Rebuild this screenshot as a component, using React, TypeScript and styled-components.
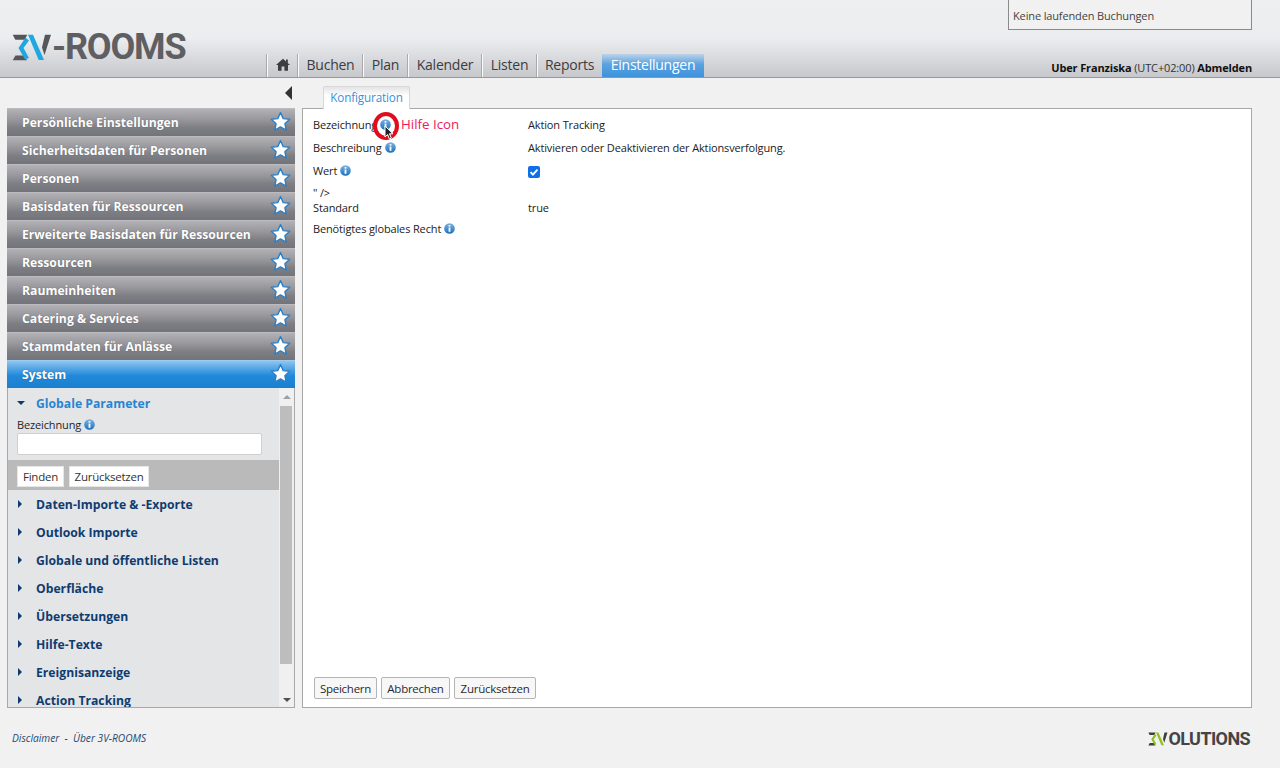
import React from "react";
import styled, { createGlobalStyle } from "styled-components";

const FONT = `"Open Sans", "Noto Sans", "Liberation Sans", sans-serif`;

const Global = createGlobalStyle`
  html, body { margin: 0; padding: 0; height: 100%; background: #f1f1f1; overflow: hidden; }
  body { font-family: ${FONT}; font-size: 11px; letter-spacing: -0.14px; color: #1f1f1f; }
  #root { height: 100%; }
  * { box-sizing: border-box; }
`;

const Page = styled.div`
  width: 1280px;
  height: 768px;
  display: flex;
  flex-direction: column;
`;

const Header = styled.header`
  height: 78px;
  flex: none;
  display: flex;
  background: linear-gradient(to bottom, #eeeff1 0, #ecedef 38px, #c7c8cc 77px);
  border-bottom: 1px solid #989898;
`;

const LogoBox = styled.div`
  width: 267px;
  flex: none;
  padding: 34px 0 0 12px;
  display: flex;
  align-items: flex-start;
`;

const LogoText = styled.span`
  font-family: Roboto, "Open Sans", sans-serif;
  font-weight: 700;
  font-size: 36px;
  line-height: 27px;
  color: #5f5f63;
  letter-spacing: -1.2px;
`;

const Nav = styled.nav`
  display: flex;
  align-items: flex-end;
  height: 77px;
`;

const NavItem = styled.a<{ $w: number; $active?: boolean }>`
  width: ${(p) => p.$w}px;
  height: 23px;
  margin-right: 1px;
  padding-bottom: 2px;
  display: flex;
  align-items: center;
  justify-content: center;
  font-size: 14px;
  letter-spacing: -0.25px;
  color: ${(p) => (p.$active ? "#fff" : "#3c3c40")};
  border-left: ${(p) => (p.$active ? "0" : "1px solid #fafafa")};
  box-shadow: ${(p) => (p.$active ? "none" : "-1px 0 0 #a9a9ad")};
  background: ${(p) =>
    p.$active ? "linear-gradient(to bottom, #bcd3e8 0, #5aa2e0 45%, #3d93db 100%)" : "transparent"};
`;

const HeaderRight = styled.div`
  margin-left: auto;
  margin-right: 28px;
  width: 244px;
  display: flex;
  flex-direction: column;
  justify-content: space-between;
  height: 77px;
`;

const Running = styled.div`
  height: 30px;
  padding: 0 0 6px 4px;
  border: 1px solid #8a8a8a;
  border-top: 0;
  background: #f1f1f1;
  display: flex;
  align-items: flex-end;
  line-height: 15px;
  color: #444;
`;

const UserLine = styled.div`
  text-align: right;
  line-height: 15px;
  padding-bottom: 2px;
  color: #333;
  white-space: nowrap;
  b { color: #111; }
`;

const SubBar = styled.div`
  height: 30px;
  flex: none;
  display: flex;
  align-items: flex-end;
  padding-left: 285px;
`;

const Collapse = styled.span`
  width: 0;
  height: 0;
  margin-bottom: 8px;
  border-top: 7px solid transparent;
  border-bottom: 7px solid transparent;
  border-right: 7px solid #333;
`;

const Tab = styled.div`
  margin-left: 31px;
  width: 87px;
  height: 23px;
  padding-bottom: 3px;
  border: 1px solid #d8d8d8;
  border-bottom: 0;
  border-radius: 2px 2px 0 0;
  background: linear-gradient(to bottom, #e4e4e6 0, #fff 40%);
  color: #3c8fd8;
  font-size: 11.7px;
  display: flex;
  align-items: center;
  justify-content: center;
  margin-bottom: -1px;
  position: relative;
  z-index: 1;
`;

const Main = styled.main`
  height: 600px;
  flex: none;
  display: flex;
  gap: 7px;
  padding: 0 28px 0 7px;
`;

const Sidebar = styled.aside`
  width: 288px;
  flex: none;
  display: flex;
  flex-direction: column;
  border-bottom: 1px solid #a8a8a8;
`;

const Section = styled.div<{ $active?: boolean }>`
  height: 28px;
  flex: none;
  display: flex;
  align-items: center;
  justify-content: space-between;
  padding: 0 5px 0 15px;
  color: #fff;
  font-weight: 700;
  font-size: 12.2px;
  letter-spacing: 0;
  text-shadow: 0 0 1px rgba(40, 40, 50, 0.5);
  background: ${(p) =>
    p.$active
      ? "linear-gradient(to bottom, #8fc4ef 0, #4fa3e4 30%, #2288da 55%, #1a7fce 100%)"
      : "linear-gradient(to bottom, #b2b2b6 0, #97979b 40%, #7d7e83 70%, #737479 100%)"};
  border-top: 1px solid ${(p) => (p.$active ? "#9dcdf3" : "#bcbcc0")};
`;

const Panel = styled.div`
  flex: 1;
  min-height: 0;
  display: flex;
  background: #e4e5e7;
  border-left: 1px solid #a8a8a8;
  border-right: 1px solid #a8a8a8;
`;

const PanelBody = styled.div`
  flex: 1;
  min-width: 0;
  overflow: hidden;
`;

const Group = styled.div<{ $open?: boolean }>`
  height: 28px;
  display: flex;
  align-items: center;
  padding: ${(p) => (p.$open ? "2px 0 0 9px" : "0 0 0 9px")};
  font-weight: 700;
  font-size: 12.2px;
  letter-spacing: 0;
  color: ${(p) => (p.$open ? "#2a84d2" : "#0f3c70")};
`;

const Caret = styled.span<{ $open?: boolean }>`
  width: 0;
  height: 0;
  flex: none;
  margin-right: ${(p) => (p.$open ? "11px" : "14px")};
  margin-left: ${(p) => (p.$open ? "0" : "1px")};
  ${(p) =>
    p.$open
      ? "border-left: 4px solid transparent; border-right: 4px solid transparent; border-top: 4px solid #0f3c70;"
      : "border-top: 4px solid transparent; border-bottom: 4px solid transparent; border-left: 4px solid #0f3c70;"}
`;

const FilterLabel = styled.div`
  display: flex;
  align-items: center;
  gap: 3px;
  padding: 0 0 1px 9px;
  height: 17px;
`;

const FilterInput = styled.input`
  display: block;
  width: 245px;
  height: 22px;
  margin: 0 0 5px 9px;
  border: 1px solid #cfcfcf;
  border-radius: 2px;
  background: #fff;
`;

const FilterBar = styled.div`
  height: 30px;
  background: #bababa;
  padding: 6px 0 0 9px;
  display: flex;
  gap: 5px;
`;

const FlatButton = styled.button<{ $w: number }>`
  width: ${(p) => p.$w}px;
  height: 21px;
  padding: 0;
  border: 1px solid #e6e6e6;
  background: #fff;
  font: 11.5px ${FONT};
  letter-spacing: -0.25px;
  color: #333;
`;

const Scroll = styled.div`
  width: 15px;
  flex: none;
  background: #f0f0f0;
  display: flex;
  flex-direction: column;
  align-items: center;
  padding: 7px 0 5px;
`;

const ScrollArrow = styled.span<{ $up?: boolean }>`
  width: 0;
  height: 0;
  border-left: 4px solid transparent;
  border-right: 4px solid transparent;
  ${(p) => (p.$up ? "border-bottom: 4px solid #a0a0a0;" : "border-top: 4px solid #505050;")}
`;

const Thumb = styled.div`
  width: 12px;
  height: 258px;
  margin: 7px 1px 0 0;
  background: #bdbdbd;
`;

const Spacer = styled.div`
  flex: 1;
`;

const Content = styled.section`
  flex: 1;
  min-width: 0;
  display: flex;
  flex-direction: column;
  background: #fff;
  border: 1px solid #a8a8a8;
  padding: 4px 10px 8px;
  position: relative;
`;

const Row = styled.div<{ $h: number }>`
  display: grid;
  grid-template-columns: 215px 1fr;
  height: ${(p) => p.$h}px;
  align-items: center;
  color: #222;
`;

const Label = styled.div`
  display: flex;
  align-items: center;
  gap: 3px;
`;

const Stray = styled.div`
  height: 13px;
  margin-top: 4px;
  line-height: 14px;
  color: #222;
`;

const Check = styled.span`
  width: 12px;
  height: 12px;
  margin-top: 2px;
  border-radius: 2px;
  background: #0f6fe6;
  display: flex;
  align-items: center;
  justify-content: center;
`;

const Actions = styled.div`
  margin-top: auto;
  display: flex;
  gap: 4px;
  padding-left: 1px;
`;

const ActionButton = styled.button<{ $w: number }>`
  width: ${(p) => p.$w}px;
  height: 22px;
  padding: 0;
  border: 1px solid #b4b4b4;
  border-radius: 2px;
  background: #f7f7f7;
  font: 11.5px ${FONT};
  letter-spacing: -0.25px;
  color: #2a2a30;
`;

const Highlight = styled.div`
  position: absolute;
  left: 70px;
  top: 3px;
  width: 26px;
  height: 28px;
  border: 4.5px solid #e00d1e;
  border-radius: 50%;
`;

const Pointer = styled.svg`
  position: absolute;
  left: 81px;
  top: 16px;
`;

const Annotation = styled.span`
  position: absolute;
  left: 98px;
  top: 6px;
  font-size: 13.3px;
  letter-spacing: 0;
  line-height: 18px;
  color: #f0195a;
`;

const Footer = styled.footer`
  flex: 1;
  display: flex;
  align-items: center;
  justify-content: space-between;
  padding: 0 30px 0 12px;
`;

const FooterLinks = styled.div`
  font-size: 10.2px;
  letter-spacing: 0;
  font-style: italic;
  color: #1c4a72;
`;

const FootLogo = styled.div`
  display: flex;
  align-items: center;
  margin-top: 2px;
`;

const FootLogoText = styled.span`
  font-family: Roboto, "Open Sans", sans-serif;
  font-weight: 700;
  font-size: 18px;
  line-height: 16px;
  letter-spacing: -0.6px;
  color: #444448;
`;

const Info = ({ size = 11 }: { size?: number }) => (
  <svg width={size} height={size} viewBox="0 0 12 12" style={{ flex: "none" }}>
    <defs>
      <linearGradient id="ig" x1="0" y1="0" x2="0" y2="1">
        <stop offset="0" stopColor="#7db4e2" />
        <stop offset="1" stopColor="#1f6fb8" />
      </linearGradient>
    </defs>
    <circle cx="6" cy="6" r="5.8" fill="url(#ig)" />
    <rect x="5" y="5" width="2" height="4.6" fill="#fff" />
    <rect x="5" y="2.3" width="2" height="1.7" fill="#fff" />
  </svg>
);

const Star = () => (
  <svg width="21" height="21" viewBox="0 0 24 24" style={{ flex: "none", marginBottom: 3, marginRight: -1 }}>
    <path
      d="M12 1.8l3.1 6.9 7.4.8-5.5 5 1.5 7.4L12 18.2l-6.5 3.7L7 14.5l-5.5-5 7.4-.8z"
      fill="#fff"
      stroke="#2a7fc8"
      strokeWidth="1.6"
      strokeLinejoin="round"
    />
  </svg>
);

const Home = () => (
  <svg width="14" height="13" viewBox="0 0 14 13">
    <path d="M7 .8L0 7h2v5.8h3.6V8.6h2.8v4.2H12V7h2l-2.2-2V1.5H10v1.9z" fill="#3d3d40" />
  </svg>
);

const Mark = ({ dark, accent, w, h }: { dark: string; accent: string; w: number; h: number }) => (
  <svg width={w} height={h} viewBox="0 0 40 27" style={{ flex: "none" }}>
    <path d="M.7.7h14.6l-2.6 5H3.3z" fill={dark} />
    <path d="M.7 26.3l2.8-4.8H12l3 4.8z" fill={dark} />
    <path d="M13.5 3.5L17 6.5 11.5 14 17 24l-4 1.5L6.5 14z" fill={accent} />
    <path d="M16 .7h5L32 26h-5.3z" fill={accent} />
    <path d="M33 .7h6L32.5 21 30 13.5z" fill={dark} />
  </svg>
);

const sections = [
  "Persönliche Einstellungen",
  "Sicherheitsdaten für Personen",
  "Personen",
  "Basisdaten für Ressourcen",
  "Erweiterte Basisdaten für Ressourcen",
  "Ressourcen",
  "Raumeinheiten",
  "Catering & Services",
  "Stammdaten für Anlässe",
];

const groups = [
  "Daten-Importe & -Exporte",
  "Outlook Importe",
  "Globale und öffentliche Listen",
  "Oberfläche",
  "Übersetzungen",
  "Hilfe-Texte",
  "Ereignisanzeige",
  "Action Tracking",
];

export default function App() {
  return (
    <Page>
      <Global />
      <Header>
        <LogoBox>
          <Mark dark="#55555a" accent="#1ea7e0" w={40} h={27} />
          <LogoText>-ROOMS</LogoText>
        </LogoBox>
        <Nav>
          <NavItem $w={30}><Home /></NavItem>
          <NavItem $w={64}>Buchen</NavItem>
          <NavItem $w={44}>Plan</NavItem>
          <NavItem $w={73}>Kalender</NavItem>
          <NavItem $w={54}>Listen</NavItem>
          <NavItem $w={64}>Reports</NavItem>
          <NavItem $w={102} $active>Einstellungen</NavItem>
        </Nav>
        <HeaderRight>
          <Running>Keine laufenden Buchungen</Running>
          <UserLine><b>Uber Franziska</b> (UTC+02:00) <b>Abmelden</b></UserLine>
        </HeaderRight>
      </Header>
      <SubBar>
        <Collapse />
        <Tab>Konfiguration</Tab>
      </SubBar>
      <Main>
        <Sidebar>
          {sections.map((s) => (
            <Section key={s}>{s}<Star /></Section>
          ))}
          <Section $active>System<Star /></Section>
          <Panel>
            <PanelBody>
              <Group $open><Caret $open />Globale Parameter</Group>
              <FilterLabel>Bezeichnung <Info /></FilterLabel>
              <FilterInput />
              <FilterBar>
                <FlatButton $w={47}>Finden</FlatButton>
                <FlatButton $w={80}>Zurücksetzen</FlatButton>
              </FilterBar>
              {groups.map((g) => (
                <Group key={g}><Caret />{g}</Group>
              ))}
            </PanelBody>
            <Scroll>
              <ScrollArrow $up />
              <Thumb />
              <Spacer />
              <ScrollArrow />
            </Scroll>
          </Panel>
        </Sidebar>
        <Content>
          <Row $h={23}><Label>Bezeichnung <Info /></Label><div>Aktion Tracking</div></Row>
          <Row $h={23}><Label>Beschreibung <Info /></Label><div>Aktivieren oder Deaktivieren der Aktionsverfolgung.</div></Row>
          <Row $h={23}>
            <Label>Wert <Info /></Label>
            <Check>
              <svg width="10" height="10" viewBox="0 0 10 10">
                <path d="M1.5 5.2l2.4 2.4 4.6-5" fill="none" stroke="#fff" strokeWidth="1.9" />
              </svg>
            </Check>
          </Row>
          <Stray>" /&gt;</Stray>
          <Row $h={16}><div>Standard</div><div>true</div></Row>
          <Row $h={26}><Label>Benötigtes globales Recht <Info /></Label><div /></Row>
          <Actions>
            <ActionButton $w={63}>Speichern</ActionButton>
            <ActionButton $w={69}>Abbrechen</ActionButton>
            <ActionButton $w={82}>Zurücksetzen</ActionButton>
          </Actions>
          <Highlight />
          <Pointer width="12" height="17" viewBox="0 0 12 17">
            <path d="M1 1v11l2.6-2.5L5.4 14l1.9-.9-1.8-4.3H9z" fill="#222" stroke="#fff" strokeWidth="1" />
          </Pointer>
          <Annotation>Hilfe Icon</Annotation>
        </Content>
      </Main>
      <Footer>
        <FooterLinks>Disclaimer &nbsp;-&nbsp; Über 3V-ROOMS</FooterLinks>
        <FootLogo>
          <Mark dark="#3e3e42" accent="#8ec31f" w={20} h={14} />
          <FootLogoText>OLUTIONS</FootLogoText>
        </FootLogo>
      </Footer>
    </Page>
  );
}
